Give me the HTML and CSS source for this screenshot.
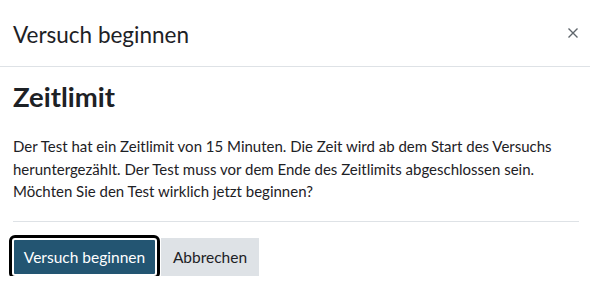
FILE: index.html
```html
<!DOCTYPE html>
<html lang="de">
<head>
<meta charset="utf-8">
<link rel="stylesheet" href="styles.css">
</head>
<body>
<div class="modal">
  <div class="modal-header">
    <h5 class="modal-title">Versuch beginnen</h5>
    <button class="close" aria-label="Schließen">
      <svg width="10" height="10" viewBox="0 0 10 10"><path d="M0.5 0.5 L9.5 9.5 M9.5 0.5 L0.5 9.5" stroke="#5f666c" stroke-width="1.4" fill="none"/></svg>
    </button>
  </div>
  <div class="modal-body">
    <h3 class="section-title">Zeitlimit</h3>
    <p class="text">Der Test hat ein Zeitlimit von 15 Minuten. Die Zeit wird ab dem Start des Versuchs heruntergezählt. Der Test muss vor dem Ende des Zeitlimits abgeschlossen sein. Möchten Sie den Test wirklich jetzt beginnen?</p>
    <hr class="divider">
    <div class="actions">
      <button class="btn btn-primary">Versuch beginnen</button>
      <button class="btn btn-secondary">Abbrechen</button>
    </div>
  </div>
</div>
</body>
</html>
```
FILE: styles.css
```css
html, body {
  margin: 0;
  padding: 0;
  background: #fff;
}
body {
  font-family: Lato, "Noto Sans", sans-serif;
  color: #1d2125;
}
.modal {
  width: 590px;
}
.modal-header {
  height: 66px;
  border-bottom: 1px solid #dee2e6;
  display: flex;
  align-items: center;
  justify-content: space-between;
  padding: 0 12px 0 13px;
}
.modal-title {
  margin: 0;
  font-size: 22.5px;
  font-weight: 400;
  line-height: 27px;
  position: relative;
  top: 1px;
}
.close {
  background: none;
  border: 0;
  padding: 0;
  width: 10px;
  height: 10px;
  display: flex;
}
.modal-body {
  padding: 0 11px 0 13px;
}
.section-title {
  margin: 15px 0 0;
  font-size: 27.5px;
  font-weight: 700;
  line-height: 30px;
}
.text {
  margin: 23px 0 0;
  font-size: 15px;
  line-height: 22.5px;
}
.divider {
  margin: 18.5px 0 0;
  border: 0;
  border-top: 1px solid #dee2e6;
  height: 0;
}
.actions {
  display: flex;
  gap: 4px;
  margin-top: 16px;
}
.btn {
  font-family: inherit;
  font-size: 15.5px;
  height: 38px;
  border-radius: 0;
  border: 0;
  padding: 0 8px;
  white-space: nowrap;
  color: #1d2125;
}
.btn-primary {
  background: #235572;
  color: #fff;
  border: 2px solid #fff;
  outline: 3px solid #000;
  border-radius: 3px;
  margin-left: -1px;
  width: 145px;
}
.btn-secondary {
  background: #dee2e6;
  width: 98px;
}
```
